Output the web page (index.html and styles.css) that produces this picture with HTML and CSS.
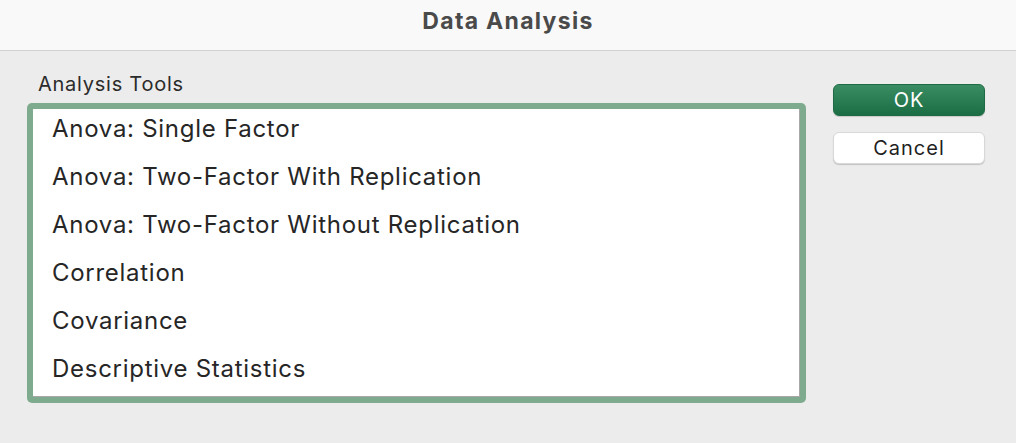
FILE: index.html
```html
<!DOCTYPE html>
<html lang="en">
<head>
<meta charset="utf-8">
<title>Data Analysis</title>
<link rel="stylesheet" href="styles.css">
</head>
<body>
<div class="dialog">
  <header class="titlebar">Data Analysis</header>
  <main class="content">
    <section class="tools">
      <div class="label">Analysis Tools</div>
      <div class="listbox">
        <div class="listinner">
          <ul class="items">
            <li>Anova: Single Factor</li>
            <li>Anova: Two-Factor With Replication</li>
            <li>Anova: Two-Factor Without Replication</li>
            <li>Correlation</li>
            <li>Covariance</li>
            <li>Descriptive Statistics</li>
          </ul>
        </div>
      </div>
    </section>
    <aside class="buttons">
      <button class="btn btn-ok">OK</button>
      <button class="btn btn-cancel">Cancel</button>
    </aside>
  </main>
</div>
</body>
</html>
```

FILE: styles.css
```css
* { box-sizing: border-box; }
html, body {
  margin: 0;
  padding: 0;
  width: 1016px;
  height: 443px;
  overflow: hidden;
  background: #ececec;
  font-family: Inter, "Liberation Sans", sans-serif;
}
.dialog {
  width: 1016px;
  height: 443px;
  background: #ececec;
}
.titlebar {
  height: 51px;
  padding-top: 7px;
  background: #f9f9f9;
  border-bottom: 1px solid #d2d2d2;
  text-align: center;
  font-weight: 700;
  font-size: 23px;
  line-height: 28px;
  letter-spacing: 1.3px;
  color: #4a4a4a;
}
.content {
  display: flex;
  padding: 21px 31px 0 27px;
  gap: 27px;
}
.tools {
  width: 779px;
}
.label {
  font-size: 20px;
  line-height: 24px;
  letter-spacing: 0.75px;
  color: #2b2b2b;
  padding-left: 11px;
  margin-bottom: 7px;
}
.listbox {
  background: #7eab8d;
  padding: 6px;
  border-radius: 5px;
  height: 300px;
}
.listinner {
  background: #ffffff;
  height: 288px;
  border-right: 1px solid #a8a8a8;
  border-bottom: 1px solid #a8a8a8;
  overflow: hidden;
}
.items {
  list-style: none;
  margin: -4px 0 0 0;
  padding: 0 0 0 19px;
}
.items li {
  height: 48px;
  font-size: 24px;
  line-height: 48px;
  letter-spacing: 0.72px;
  color: #262626;
  white-space: nowrap;
}
.buttons {
  display: flex;
  flex-direction: column;
  gap: 16px;
  margin-top: 12px;
  width: 152px;
}
.btn {
  height: 32px;
  width: 152px;
  border-radius: 6px;
  font-family: Inter, "Liberation Sans", sans-serif;
  font-size: 20px;
  line-height: 30px;
  padding: 0;
  text-align: center;
  cursor: default;
}
.btn-ok {
  background: linear-gradient(#3a8d63, #1b6d44);
  color: #ffffff;
  border: 1px solid #1f6b45;
  box-shadow: 0 1px 1px rgba(0,0,0,0.15);
  letter-spacing: 0.8px;
}
.btn-cancel {
  background: #ffffff;
  color: #1f1f1f;
  border: 1px solid #d8d8d8;
  box-shadow: 0 1px 1px rgba(0,0,0,0.18);
  letter-spacing: 1px;
}
```
